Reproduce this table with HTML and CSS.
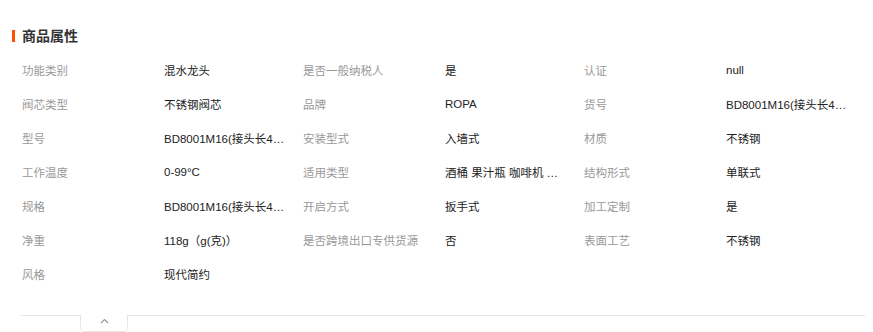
FILE: index.html
```html
<!DOCTYPE html>
<html lang="zh">
<head>
<meta charset="utf-8">
<link rel="stylesheet" href="styles.css">
</head>
<body>
<section class="attrs">
  <h2 class="title">商品属性</h2>
  <div class="grid">
    <div class="k">功能类别</div><div class="v">混水龙头</div>
    <div class="k">是否一般纳税人</div><div class="v">是</div>
    <div class="k">认证</div><div class="v">null</div>

    <div class="k">阀芯类型</div><div class="v">不锈钢阀芯</div>
    <div class="k">品牌</div><div class="v">ROPA</div>
    <div class="k">货号</div><div class="v">BD8001M16(接头长4分, 硬管)</div>

    <div class="k">型号</div><div class="v">BD8001M16(接头长4分, 硬管)</div>
    <div class="k">安装型式</div><div class="v">入墙式</div>
    <div class="k">材质</div><div class="v">不锈钢</div>

    <div class="k">工作温度</div><div class="v">0-99°C</div>
    <div class="k">适用类型</div><div class="v">酒桶 果汁瓶 咖啡机 饮水机</div>
    <div class="k">结构形式</div><div class="v">单联式</div>

    <div class="k">规格</div><div class="v">BD8001M16(接头长4分, 硬管)</div>
    <div class="k">开启方式</div><div class="v">扳手式</div>
    <div class="k">加工定制</div><div class="v">是</div>

    <div class="k">净重</div><div class="v">118g（g(克)）</div>
    <div class="k">是否跨境出口专供货源</div><div class="v">否</div>
    <div class="k">表面工艺</div><div class="v">不锈钢</div>

    <div class="k">风格</div><div class="v">现代简约</div>
  </div>
  <div class="foot">
    <button class="fold" type="button" aria-label="收起">
      <svg width="9" height="6" viewBox="0 0 9 6"><path d="M1 5 L4.5 1.5 L8 5" fill="none" stroke="#999" stroke-width="1.2"/></svg>
    </button>
  </div>
</section>
</body>
</html>
```

FILE: styles.css
```css
* { box-sizing: border-box; }
body {
  margin: 0;
  background: #fff;
  font-family: "Liberation Sans", "Noto Sans CJK SC", sans-serif;
  color: #333;
}
.attrs {
  padding: 25px 8px 0 12px;
}
.title {
  margin: 0;
  font-size: 14px;
  line-height: 20px;
  font-weight: bold;
  color: #333;
  border-left: 3px solid #ff5000;
  padding-left: 7px;
  height: 12px;
  display: flex;
  align-items: center;
  margin-top: 5px;
}
.grid {
  margin-top: 11px;
  padding-left: 10px;
  display: grid;
  grid-template-columns: repeat(3, 142px 139px);
  grid-auto-rows: 34px;
  font-size: 11.5px;
  align-items: center;
}
.k {
  color: #999;
  white-space: nowrap;
}
.v {
  color: #222;
  white-space: nowrap;
  overflow: hidden;
  text-overflow: ellipsis;
  max-width: 121px;
}
.foot {
  margin-top: 24px;
  margin-left: 8px;
  border-top: 1px solid #e6e6e6;
  width: 845px;
  height: 17px;
  padding-left: 60px;
}
.fold {
  display: flex;
  align-items: flex-start;
  justify-content: center;
  margin-top: -1px;
  width: 48px;
  height: 17px;
  padding: 3px 0 0;
  background: #fff;
  border: 1px solid #e6e6e6;
  border-top: none;
  border-radius: 0 0 5px 5px;
}
```
